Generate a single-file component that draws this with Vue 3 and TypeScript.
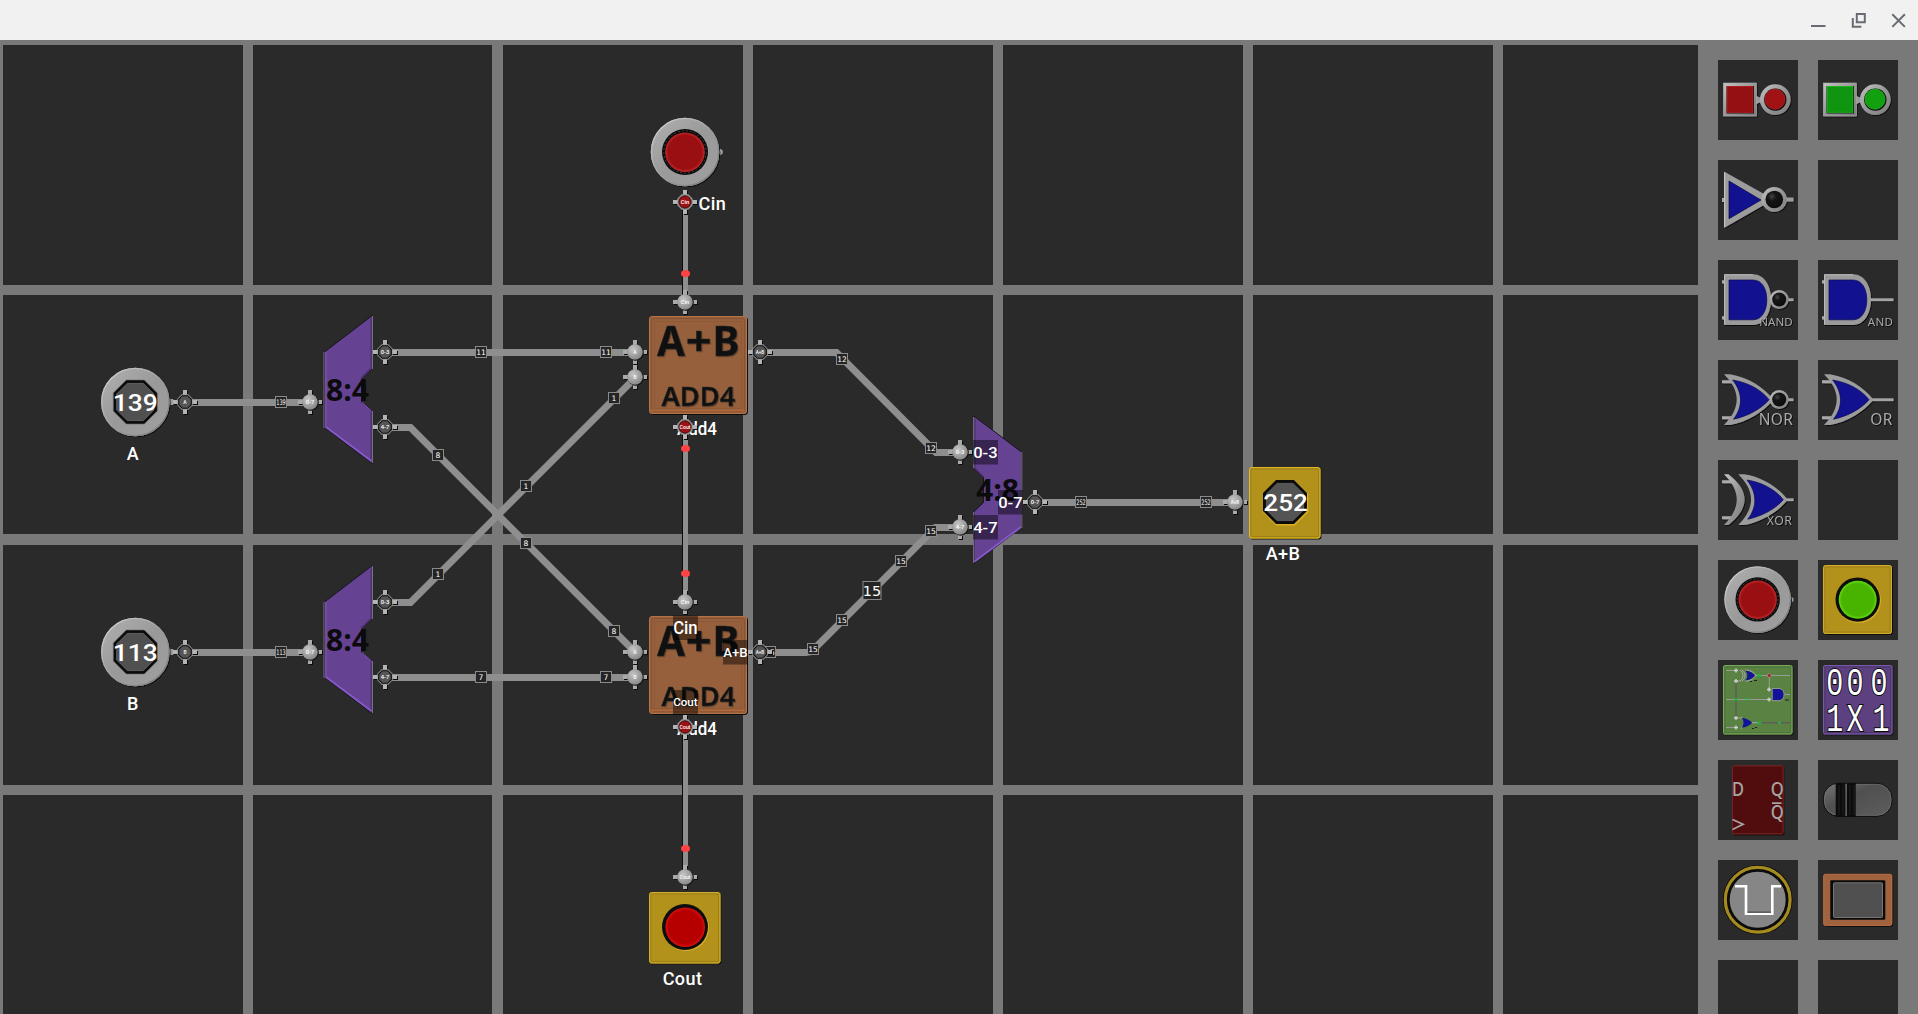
<script setup lang="ts">
type PinKind = 'in' | 'out' | 'on'
interface Pin { x: number; y: number; kind: PinKind; text: string }
interface Tag { x: number; y: number; text: string; size?: number }
interface Hint { x: number; y: number; text: string; size: number; base: number }

const cells = Array.from({ length: 28 }, (_, i) => ({ col: i % 7, row: Math.floor(i / 7) }))

const buses: string[] = [
  'M185 402.5H310',
  'M185 652.5H310',
  'M385 352.5H635',
  'M385 677.5H635',
  'M385 427.5H410.5L635 652',
  'M385 602.5H410.5L635 378',
  'M760 352.5H836.5L936 452.5H960',
  'M810.5 652.5L935.5 527.5H960',
  'M1035 502.5H1235',
]
const wires = [
  { y1: 202, y2: 302 },
  { y1: 427, y2: 602 },
  { y1: 727, y2: 877 },
]
const sparks = [273.5, 448.5, 573.5, 848.5]

const tags: Tag[] = [
  { x: 281, y: 402, text: '139' }, { x: 281, y: 652, text: '113' },
  { x: 481, y: 352, text: '11' }, { x: 606, y: 352, text: '11' },
  { x: 481, y: 677, text: '7' }, { x: 606, y: 677, text: '7' },
  { x: 438, y: 455, text: '8' }, { x: 526, y: 543, text: '8' }, { x: 614, y: 631, text: '8' },
  { x: 438, y: 574, text: '1' }, { x: 526, y: 486, text: '1' }, { x: 614, y: 398, text: '1' },
  { x: 842, y: 359, text: '12' }, { x: 931, y: 448, text: '12' },
  { x: 770, y: 652, text: '15' }, { x: 813, y: 649, text: '15' }, { x: 842, y: 620, text: '15' },
  { x: 872, y: 590.5, text: '15', size: 18 }, { x: 901, y: 561, text: '15' }, { x: 931, y: 531, text: '15' },
  { x: 1081, y: 502, text: '252' }, { x: 1206, y: 502, text: '252' },
]

const pins: Pin[] = [
  { x: 185, y: 402, kind: 'out', text: 'A' },
  { x: 185, y: 652, kind: 'out', text: 'B' },
  { x: 310, y: 402, kind: 'in', text: '0-7' },
  { x: 310, y: 652, kind: 'in', text: '0-7' },
  { x: 385, y: 352, kind: 'out', text: '0-3' },
  { x: 385, y: 427, kind: 'out', text: '4-7' },
  { x: 385, y: 602, kind: 'out', text: '0-3' },
  { x: 385, y: 677, kind: 'out', text: '4-7' },
  { x: 635, y: 352, kind: 'in', text: 'A' },
  { x: 635, y: 377, kind: 'in', text: 'B' },
  { x: 635, y: 652, kind: 'in', text: 'A' },
  { x: 635, y: 677, kind: 'in', text: 'B' },
  { x: 760, y: 352, kind: 'out', text: 'A+B' },
  { x: 760, y: 652, kind: 'out', text: 'A+B' },
  { x: 685, y: 202, kind: 'on', text: 'Cin' },
  { x: 685, y: 302, kind: 'in', text: 'Cin' },
  { x: 685, y: 427, kind: 'on', text: 'Cout' },
  { x: 685, y: 602, kind: 'in', text: 'Cin' },
  { x: 685, y: 727, kind: 'on', text: 'Cout' },
  { x: 685, y: 877, kind: 'in', text: 'Cout' },
  { x: 960, y: 452, kind: 'in', text: '0-3' },
  { x: 960, y: 527, kind: 'in', text: '4-7' },
  { x: 1035, y: 502, kind: 'out', text: '0-7' },
  { x: 1235, y: 502, kind: 'in', text: 'A+B' },
]

const hints: Hint[] = [
  { x: 673, y: 615.5, text: 'Cin', size: 17.5, base: 18 },
  { x: 723, y: 640, text: 'A+B', size: 13.5, base: 17.2 },
  { x: 673, y: 690, text: 'Cout', size: 11, base: 16 },
  { x: 973, y: 440, text: '0-3', size: 15, base: 17.6 },
  { x: 973, y: 515, text: '4-7', size: 15, base: 17.6 },
  { x: 998, y: 490, text: '0-7', size: 15, base: 17.6 },
]

const numberInputs = [
  { x: 135.3, y: 402, value: '139', name: 'A' },
  { x: 135.3, y: 652, value: '113', name: 'B' },
]

const tools = [
  'low', 'high', 'not', '', 'nand', 'and', 'nor', 'or', 'xor', '',
  'input', 'output', 'chip', 'rom', 'dff', 'toggle', 'clock', 'screen', '', '',
]

const OCT = 'M-9 -22H9L22 -9V9L9 22H-9L-22 9V-9Z'
const OCT_IN = 'M-8 -18.6H8L18.6 -8V8L8 18.6H-8L-18.6 8V-8Z'
const PIN_OCT = 'M-3 -7H3L7 -3V3L3 7H-3L-7 3V-3Z'
</script>

<template>
  <div class="window">
    <svg class="defs" width="0" height="0">
      <defs>
        <linearGradient id="metal" x1="0" y1="0" x2="1" y2="1">
          <stop offset="0" stop-color="#c4c4c4" /><stop offset=".5" stop-color="#979797" /><stop offset="1" stop-color="#7d7d7d" />
        </linearGradient>
        <linearGradient id="ring" x1="0" y1="0" x2="1" y2="1">
          <stop offset="0" stop-color="#b2b2b2" /><stop offset=".5" stop-color="#999" /><stop offset="1" stop-color="#a0a0a0" />
        </linearGradient>
        <linearGradient id="rim" x1="0" y1="0" x2="1" y2="1">
          <stop offset="0" stop-color="#d8d8d8" /><stop offset=".5" stop-color="#a0a0a0" /><stop offset="1" stop-color="#6e6e6e" />
        </linearGradient>
        <radialGradient id="redBtn" cx=".5" cy=".5" r=".5">
          <stop offset="0" stop-color="#9a1012" /><stop offset=".85" stop-color="#9a1012" /><stop offset="1" stop-color="#c2282a" />
        </radialGradient>
        <radialGradient id="litRed" cx=".5" cy=".5" r=".5">
          <stop offset="0" stop-color="#b60000" /><stop offset=".84" stop-color="#b60000" /><stop offset="1" stop-color="#da1010" />
        </radialGradient>
        <radialGradient id="greenBtn" cx=".5" cy=".5" r=".5">
          <stop offset="0" stop-color="#48b400" /><stop offset=".84" stop-color="#48b400" /><stop offset="1" stop-color="#62de10" />
        </radialGradient>
        <radialGradient id="knob" cx=".38" cy=".34" r=".7">
          <stop offset="0" stop-color="#c6c6c6" /><stop offset="1" stop-color="#858585" />
        </radialGradient>
        <radialGradient id="bulb" cx=".36" cy=".33" r=".7">
          <stop offset="0" stop-color="#444" /><stop offset=".35" stop-color="#151515" /><stop offset="1" stop-color="#0c0c0c" />
        </radialGradient>
        <linearGradient id="pill" x1="0" y1="0" x2="1" y2="1">
          <stop offset="0" stop-color="#777" /><stop offset=".4" stop-color="#505050" /><stop offset="1" stop-color="#5d5d5d" />
        </linearGradient>
        <filter id="emboss" x="-10%" y="-10%" width="120%" height="120%">
          <feDropShadow dx="1" dy="1" stdDeviation="0.2" flood-color="#090909" />
        </filter>
      </defs>
    </svg>

    <header class="titlebar">
      <svg class="ctl" viewBox="0 0 40 40"><path d="M13 26h14.5" /></svg>
      <svg class="ctl" viewBox="0 0 40 40"><path d="M18.8 14h8v8.2h-8zM14.8 18v8.8h8.6" /></svg>
      <svg class="ctl" viewBox="0 0 40 40"><path d="M14.3 14.3l12.6 12.6M26.9 14.3L14.3 26.9" /></svg>
    </header>

    <main class="body">
      <section class="board">
        <div class="grid">
          <div v-for="(c, i) in cells" :key="i" class="cell" :class="{ narrow: c.col === 1, short: c.row === 1 }"></div>
        </div>

        <svg class="circuit" viewBox="0 40 1698 974" width="1698" height="974">
          <!-- wires -->
          <path v-for="d in buses" :key="d" :d="d" class="bus" />
          <g v-for="w in wires" :key="w.y1">
            <rect x="682" :y="w.y1" width="6" :height="w.y2 - w.y1" fill="#0c0c0c" />
            <rect x="683" :y="w.y1" width="5" :height="w.y2 - w.y1" fill="#8e8e8e" />
          </g>
          <ellipse v-for="y in sparks" :key="y" cx="685.5" :cy="y" rx="4.5" ry="3.5" fill="#ff4242" />
          <g v-for="(t, i) in tags" :key="'t' + i" :transform="`translate(${t.x} ${t.y})`">
            <rect :x="-(t.size ?? 11) / 2" :y="-(t.size ?? 11) / 2" :width="t.size ?? 11" :height="t.size ?? 11" class="tag" />
            <text y="0" :dy="t.size ? 5.2 : 2.7" :font-size="t.size ? 14.5 : 7.6" :textLength="t.text.length > 2 ? 9.5 : undefined" lengthAdjust="spacingAndGlyphs" class="tagtext">{{ t.text }}</text>
          </g>
          <path d="M776 652.5H807.5" class="bus" />
          <path d="M807 652.5L811 655.5H807Z" fill="#8e8e8e" />

          <!-- numeric inputs -->
          <g v-for="n in numberInputs" :key="n.name" :transform="`translate(${n.x} ${n.y})`">
            <path d="M33 -3H38V3H33Z" fill="#9a9a9a" />
            <circle r="34.3" fill="url(#ring)" filter="url(#emboss)" />
            <circle r="33.6" fill="none" stroke="url(#rim)" stroke-width="1.2" />
            <path :d="OCT" fill="#0b0b0b" stroke="#6d6d6d" stroke-width=".6" />
            <path :d="OCT_IN" fill="#505050" stroke="#777" stroke-width=".7" />
            <text x="0" y="9.2" class="value" textLength="45" lengthAdjust="spacingAndGlyphs">{{ n.value }}</text>
            <text x="-2.4" y="57.8" class="label">{{ n.name }}</text>
          </g>

          <!-- splitters -->
          <g v-for="dy in [0, 250]" :key="dy" :transform="`translate(0 ${dy})`">
            <path d="M324.5 352L372.3 315.5V368.5L361.5 379V402L372.3 411.5V463.5L324.5 427.5Z" fill="#654292" stroke="#171320" stroke-width="1" />
            <path d="M326 427L371.5 461" stroke="#8658c6" stroke-width="2" fill="none" />
            <path d="M326 352V427M362 402.5L371.5 411" stroke="#8152bd" stroke-width="1" fill="none" />
            <path d="M371 319V368L361 378M371 412V459" stroke="#53337b" stroke-width="1.6" fill="none" />
            <path d="M324 352V428M372.5 316V369M372.5 411V463" stroke="#77717e" stroke-width="1" fill="none" />
            <text x="347.5" y="401" class="mux" textLength="43" lengthAdjust="spacingAndGlyphs">8:4</text>
          </g>
          <g>
            <path d="M973.8 416L1021.5 452V527.5L973.8 563.5V511.7L983.5 502.5V477.5L973.8 468.5Z" fill="#654292" stroke="#171320" stroke-width="1" />
            <path d="M974.5 561.5L1021 527" stroke="#8658c6" stroke-width="2" fill="none" />
            <path d="M975 419V468L984 477" stroke="#53337b" stroke-width="1.4" fill="none" />
            <path d="M1021.8 452V528M973.6 417V468M973.6 512V563" stroke="#77717e" stroke-width="1" fill="none" />
            <text x="997.5" y="500.5" class="mux" textLength="43" lengthAdjust="spacingAndGlyphs">4:8</text>
          </g>

          <!-- adders -->
          <g v-for="dy in [0, 300]" :key="'add' + dy" :transform="`translate(0 ${dy})`">
            <text x="697" y="434.5" class="label tight" textLength="40" lengthAdjust="spacingAndGlyphs">Add4</text>
            <rect x="649.5" y="316.5" width="97" height="97" rx="2.5" fill="#95603b" stroke="#b47347" stroke-width="1" filter="url(#emboss)" />
            <rect x="651.5" y="318.5" width="93" height="93" rx="3" fill="none" stroke="#885233" stroke-width="1" />
            <rect x="654.5" y="321.5" width="87" height="87" fill="none" stroke="#8e5937" stroke-width="1" />
            <path d="M651 410.5H744" stroke="#b3673b" stroke-width="1.5" />
            <g class="face">
              <text x="671" y="355.5" class="big" textLength="28" lengthAdjust="spacingAndGlyphs">A</text>
              <text x="698.7" y="355.5" class="big" textLength="26" lengthAdjust="spacingAndGlyphs">+</text>
              <text x="726" y="355.5" class="big" textLength="27" lengthAdjust="spacingAndGlyphs">B</text>
              <text x="698.5" y="405.8" class="mid" textLength="74" lengthAdjust="spacingAndGlyphs">ADD4</text>
            </g>
          </g>

          <!-- round input -->
          <g transform="translate(685 152)">
            <path d="M32 -5.5L37.8 -1.5V1.5L32 5.5Z" fill="#9a9a9a" />
            <circle r="34.3" fill="url(#ring)" filter="url(#emboss)" />
            <circle r="33.6" fill="none" stroke="url(#rim)" stroke-width="1.2" />
            <circle r="23" fill="#0a0a0a" />
            <circle r="21.2" fill="none" stroke="#666" stroke-width=".6" stroke-dasharray="2 2" />
            <circle cy=".2" r="19.8" fill="url(#redBtn)" />
          </g>
          <text x="712.3" y="210" class="label">Cin</text>

          <!-- lamps -->
          <g transform="translate(649 892)">
            <rect x=".5" y=".5" width="70.5" height="70.5" rx="2" fill="#b3921b" stroke="#d0ad2a" filter="url(#emboss)" />
            <rect x="2" y="2" width="67.5" height="67.5" rx="1.5" fill="none" stroke="#9d8018" />
            <circle cx="37" cy="36" r="23" fill="#d5b02a" />
            <circle cx="36" cy="35" r="23" fill="#0d0d0d" />
            <circle cx="36.2" cy="35.2" r="19.8" fill="url(#litRed)" />
            <text x="33.5" y="92.5" class="label">Cout</text>
          </g>
          <g transform="translate(1249 467)">
            <rect x=".5" y=".5" width="70.5" height="70.5" rx="2" fill="#b3921b" stroke="#dfb820" filter="url(#emboss)" />
            <rect x="2" y="2" width="67.5" height="67.5" rx="1.5" fill="none" stroke="#9d8018" />
            <path :d="OCT" transform="translate(36.6 35.8) scale(1.03)" fill="#d8b020" />
            <path :d="OCT" transform="translate(36 35)" fill="#0b0b0b" />
            <path :d="OCT_IN" transform="translate(36 35)" fill="#545454" stroke="#707070" stroke-width=".7" />
            <text x="36.6" y="44.3" class="value" textLength="44.5" lengthAdjust="spacingAndGlyphs">252</text>
            <text x="34" y="92.8" class="label">A+B</text>
          </g>

          <!-- pins -->
          <g v-for="(p, i) in pins" :key="'p' + i" :transform="`translate(${p.x} ${p.y})`">
            <template v-if="p.kind === 'in'">
              <path d="M-11 -1H-6V3H-11ZM9 -1H13V3H9ZM-1 -11H3V-7H-1ZM-1 9H3V13H-1Z" fill="#0b0b0b" />
              <path d="M-12 -2H-7V2H-12ZM8.3 -2H12V2H8.3ZM-2 -12H2V-7H-2ZM-2 8.3H2V12H-2Z" fill="#aaa" />
              <circle cx=".7" cy=".7" r="8" fill="#0e0e0e" />
              <circle r="7.8" fill="url(#knob)" />
            </template>
            <template v-else>
              <path d="M-11 -1H13V3H-11ZM-1 -11H3V13H-1Z" fill="#0b0b0b" />
              <path d="M-12 -2H12V2H-12ZM-2 -12H2V12H-2Z" fill="#b4b4b4" />
              <path :d="PIN_OCT" fill="#adadad" stroke="#989898" stroke-width="1.4" />
              <path v-if="p.kind === 'out'" :d="PIN_OCT" transform="scale(.9)" fill="#555" stroke="#0b0b0b" stroke-width="1.2" />
              <circle v-else r="6.2" fill="#9c1114" stroke="#26090a" stroke-width=".9" />
            </template>
            <text y="1.7" class="pintext" :textLength="p.text.length > 1 ? (p.text.length > 3 ? 11 : 8.5) : undefined" lengthAdjust="spacingAndGlyphs">{{ p.text }}</text>
          </g>

          <!-- hover hints -->
          <g v-for="h in hints" :key="h.text + h.y" :transform="`translate(${h.x} ${h.y})`">
            <rect width="25" height="24.5" fill="#000" fill-opacity=".45" />
            <text x="12.4" :y="h.base" :font-size="h.size" textLength="24.5" lengthAdjust="spacingAndGlyphs" class="hint">{{ h.text }}</text>
          </g>
        </svg>
      </section>

      <aside class="palette">
        <div v-for="(t, i) in tools" :key="i" class="slot">
          <svg v-if="t" viewBox="0 0 80 80" width="80" height="80">
            <g v-if="t === 'low' || t === 'high'">
              <g filter="url(#emboss)">
                <path d="M37 35.5L42 37.5H46V42.5H42L37 44.5Z" fill="#9a9a9a" />
                <rect x="5.3" y="23" width="33" height="33" fill="url(#metal)" stroke="#aaa" stroke-width=".6" />
                <circle cx="57.3" cy="39.6" r="15.3" fill="url(#metal)" />
              </g>
              <rect x="8.5" y="26" width="27.5" height="27.5" fill="#101010" />
              <rect x="9.3" y="26.5" width="25.5" height="25.8" :fill="t === 'low' ? '#951012' : '#109510'" :stroke="t === 'low' ? '#b51a1c' : '#1cb41c'" stroke-width="1" />
              <circle cx="57.3" cy="39.6" r="11.2" fill="#0e0e0e" />
              <circle cx="57" cy="39.2" r="10" :fill="t === 'low' ? '#a01214' : '#10a010'" :stroke="t === 'low' ? '#bb2224' : '#22bb22'" stroke-width=".8" />
            </g>

            <g v-else-if="t === 'not'">
              <g filter="url(#emboss)">
                <rect x="4" y="38" width="3" height="4" fill="#aaa" />
                <path d="M6 11.5L46 34V45L6 68Z" fill="#9c9c9c" />
                <rect x="68" y="37.5" width="7.5" height="4" fill="#999" />
                <circle cx="56.3" cy="39.5" r="12.5" fill="url(#metal)" />
              </g>
              <path d="M6.6 12.5V67" stroke="#c2c2c2" stroke-width="1.2" />
              <path d="M11 21L43 40L11 58.7Z" fill="#121290" stroke="#080840" stroke-width=".7" />
              <circle cx="56.3" cy="39.5" r="8.8" fill="url(#bulb)" />
            </g>

            <g v-else-if="t === 'nand' || t === 'and'">
              <g filter="url(#emboss)">
                <path d="M4 20.3H8V23.5H4ZM4 56.3H8V59.5H4Z" fill="#aaa" />
                <rect x="50" y="38.3" width="25.5" height="2.8" fill="#a3a3a3" />
                <path d="M6 14.3H35C47 14.3 53 27 53 39.6S47 65 35 65H6Z" fill="#9a9a9a" />
                <circle v-if="t === 'nand'" cx="61.2" cy="39.5" r="9.5" fill="url(#metal)" />
              </g>
              <path d="M6.6 64V14.8H35" fill="none" stroke="#bcbcbc" stroke-width="1" />
              <path d="M11 20H35C44 20 48.8 29 48.8 39.8S44 59.8 35 59.8H11Z" fill="#121290" stroke="#0a0a50" stroke-width=".7" />
              <circle v-if="t === 'nand'" cx="61.2" cy="39.5" r="7" fill="url(#bulb)" />
              <text :x="t === 'nand' ? 58 : 62.3" y="65.5" font-size="11.5" class="gate" :textLength="t === 'nand' ? 33.5 : 25">{{ t.toUpperCase() }}</text>
            </g>

            <g v-else-if="t === 'nor' || t === 'or' || t === 'xor'">
              <g filter="url(#emboss)">
                <path d="M4 20.3H16V23.3H4ZM4 56.3H16V59.3H4Z" fill="#aaa" />
                <path v-if="t === 'xor'" d="M6 14.3H10.5C32 31 32 48 10.5 65H6C23 48 23 31 6 14.3Z" fill="url(#metal)" />
                <g :transform="t === 'xor' ? 'translate(14.3 0)' : undefined">
                  <rect x="50" y="38.3" :width="t === 'xor' ? 11.3 : 25.5" height="2.8" fill="#a3a3a3" />
                  <path d="M6 14.3H12C30 17 46 28 54 38V41.5C46 51 30 62 12 65H6C23 48 23 31 6 14.3Z" fill="#9c9c9c" />
                </g>
                <circle v-if="t === 'nor'" cx="61.2" cy="39.5" r="9.5" fill="url(#metal)" />
              </g>
              <path :transform="t === 'xor' ? 'translate(14.3 0)' : undefined" d="M14.7 20C30 22.5 43 29.5 51 39.7C43 49 30 56 15.5 59.2C25 47 25 33 14.7 20Z" fill="#121290" stroke="#0a0a50" stroke-width=".7" />
              <circle v-if="t === 'nor'" cx="61.2" cy="39.5" r="7" fill="url(#bulb)" />
              <text v-if="t === 'nor'" x="57.8" y="65.3" font-size="15.5" class="gate" textLength="34">NOR</text>
              <text v-else-if="t === 'or'" x="63.3" y="65.3" font-size="15.5" class="gate" textLength="22">OR</text>
              <text v-else x="61.3" y="65.3" font-size="12.3" class="gate" textLength="25">XOR</text>
            </g>

            <g v-else-if="t === 'input'">
              <path d="M71 35L75.5 38.3V41L71 44.5Z" fill="#9a9a9a" />
              <circle cx="39.6" cy="39.6" r="33.3" fill="url(#ring)" filter="url(#emboss)" />
              <circle cx="39.6" cy="39.6" r="32.6" fill="none" stroke="url(#rim)" stroke-width="1.2" />
              <circle cx="39.7" cy="39.4" r="22.2" fill="#0a0a0a" />
              <circle cx="39.7" cy="39.4" r="20.6" fill="none" stroke="#666" stroke-width=".6" stroke-dasharray="2 2" />
              <circle cx="39.7" cy="39.7" r="19.2" fill="url(#redBtn)" />
            </g>

            <g v-else-if="t === 'output'">
              <rect x="5.5" y="5.5" width="68" height="68" rx="2" fill="#b3921b" stroke="#d0ad2a" filter="url(#emboss)" />
              <rect x="7" y="7" width="65" height="65" rx="1.5" fill="none" stroke="#9d8018" />
              <circle cx="40.5" cy="40.5" r="22.5" fill="#d5b02a" />
              <circle cx="39.7" cy="39.6" r="22.2" fill="#0d0d0d" />
              <circle cx="39.7" cy="39.7" r="19" fill="url(#greenBtn)" />
            </g>

            <g v-else-if="t === 'chip'">
              <rect x="5.5" y="5.5" width="68.5" height="68.5" rx="1.5" fill="#5a8243" stroke="#78a85c" filter="url(#emboss)" />
              <rect x="7" y="7" width="65.5" height="65.5" fill="none" stroke="#4f753a" />
              <path d="M8 10.5H20M36 15.5H72M8 39.5H52M8 67.5H20M51.3 15.5V30M18 21H23M18 58H23M67 34.5H72" stroke="#9a9a9a" stroke-width="1" fill="none" />
              <path d="M18 22V60M40 62.8H72" stroke="#5e5e5e" stroke-width="1.5" fill="none" />
              <path d="M24 10C28 13 28 18 24 21M22 10C26 13 26 18 22 21M27 10C34 10 36 13 38 15.5C36 18 34 21 27 21M23 57C28 60 28 66 23 68.5M34 62.7H41" stroke="#aaa" stroke-width="1" fill="none" />
              <path d="M27.5 10.5C32 11 35 13 37 15.5C35 18 32 20 27.5 20.5C30 17 30 14 27.5 10.5ZM24 57.8C29 58.5 32 60.5 34 62.7C32 65 29 67 24 67.8C26 64 26 61 24 57.8ZM54.5 29H62C67 30 67 39 62 40H54.5Z" fill="#12129a" />
              <path d="M54.2 28.5H62C67.5 29.5 67.5 39.5 62 40.8H54.2Z" fill="none" stroke="#999" stroke-width=".8" />
              <path d="M18 8.5V12.5M16 10.5H20M18 19V23M16 21H20M51 27.5V31.5M49 29.5H53M51 37.5V41.5M49 39.5H53M18 56V60M16 58H20M18 65.5V69.5M16 67.5H20" stroke="#cfcfcf" stroke-width="1.4" />
              <path d="M32 21.5h2m2-1h3M34 68.5h2m1-1h2M67 40h4" stroke="#202020" stroke-width="1" />
              <circle cx="51.3" cy="15.5" r="1.9" fill="#9b2020" stroke="#bbb" stroke-width=".5" />
              <circle cx="41.5" cy="15.5" r="1.8" fill="#20b23c" /><circle cx="41.5" cy="62.8" r="1.8" fill="#20b23c" />
              <circle cx="18" cy="39.5" r="1.6" fill="#20b23c" /><circle cx="29" cy="39.3" r="1.2" fill="#20c23c" /><circle cx="61.5" cy="62.8" r="1.2" fill="#20c23c" />
            </g>

            <g v-else-if="t === 'rom'">
              <rect x="5.5" y="5.5" width="68.5" height="68.5" rx="1.5" fill="#5b417f" stroke="#775aa6" filter="url(#emboss)" />
              <rect x="7" y="7" width="65.5" height="65.5" fill="none" stroke="#4c366c" />
              <text v-for="(g, k) in ['0', '0', '0', '1', 'X', '1']" :key="k" :x="[16.7, 37, 61][k % 3] + (k === 5 ? 2 : 0)" :y="k < 3 ? 34.6 : 71.3" textLength="17" lengthAdjust="spacingAndGlyphs" class="rom">{{ g }}</text>
            </g>

            <g v-else-if="t === 'dff'">
              <rect x="14.5" y="5.8" width="50.5" height="68" rx="1" fill="#510f11" stroke="#7b2426" filter="url(#emboss)" />
              <text x="20" y="36" class="ff" textLength="12" lengthAdjust="spacingAndGlyphs">D</text>
              <text x="59.3" y="36" class="ff" textLength="13" lengthAdjust="spacingAndGlyphs">Q</text>
              <text x="59.3" y="58.6" class="ff" textLength="13" lengthAdjust="spacingAndGlyphs">Q</text>
              <path d="M54 43.2H63.5M14.5 59.5L25 64.3L14.5 69.5" fill="none" stroke="#a5a5a5" stroke-width="1.8" />
            </g>

            <g v-else-if="t === 'toggle'">
              <rect x="5.3" y="23.3" width="68.7" height="33" rx="15" fill="url(#pill)" stroke="#0b0b0b" stroke-width="1" />
              <rect x="6.5" y="24.3" width="66.5" height="31" rx="14" fill="none" stroke="#777" stroke-width=".8" opacity=".7" />
              <path d="M17.7 23H27.3V57H17.7ZM29 23H37.7V57H29Z" fill="#0c0c0c" />
              <path d="M28.2 24V56" stroke="#5a5a5a" stroke-width="1" />
              <path d="M21 25V55M25 25V55M32 25V55M36 25V55" stroke="#262626" stroke-width=".8" />
            </g>

            <g v-else-if="t === 'clock'">
              <circle cx="39.7" cy="39.7" r="34.8" fill="#0a0a0a" />
              <circle cx="39.7" cy="39.7" r="32.4" fill="none" stroke="#a48b20" stroke-width="3.2" />
              <circle cx="39.7" cy="39.7" r="29" fill="#868686" stroke="#0c0c0c" stroke-width="2" />
              <path d="M17 26.3H28V53.8H54.3V26.3H63" fill="none" stroke="#fff" stroke-width="2.6" />
              <path d="M29.5 52.2H53" stroke="#333" stroke-width="1" />
            </g>

            <g v-else-if="t === 'screen'">
              <rect x="5.7" y="14.3" width="68" height="51" rx="1.5" fill="#a06440" stroke="#bd6d40" filter="url(#emboss)" />
              <rect x="12.3" y="20.3" width="55" height="39.5" rx="1" fill="#0a0a0a" />
              <rect x="15.5" y="22.8" width="49" height="34.7" rx="1" fill="#505050" stroke="#747474" />
            </g>
          </svg>
        </div>
      </aside>
    </main>
  </div>
</template>

<style>
body { margin: 0; overflow: hidden; }
</style>

<style scoped>
.window { width: 1918px; height: 1014px; display: flex; flex-direction: column; overflow: hidden; background: #797979; font-family: Roboto, "Liberation Sans", sans-serif; }
.defs { position: absolute; }
.titlebar { flex: 0 0 40px; display: flex; justify-content: flex-end; background: #f1f1f1; }
.ctl { width: 40px; height: 40px; fill: none; stroke: #686c71; stroke-width: 2; }
.body { flex: 1; display: flex; min-height: 0; }
.board { position: relative; width: 1698px; flex: none; overflow: hidden; }
.grid { display: grid; grid-template-columns: repeat(6, 240px) 195px; grid-template-rows: repeat(4, 240px); gap: 10px; padding: 5px 0 0 3px; }
.cell { background: #2a2a2a; }
.cell.narrow { margin-right: 1px; }
.cell.short { margin-bottom: 1px; }
.circuit { position: absolute; left: 0; top: 0; }
.circuit text, .slot text { text-anchor: middle; }
.bus { fill: none; stroke: #8e8e8e; stroke-width: 7; }
.tag { fill: #242424; stroke: #8a8a8a; stroke-width: 1; }
.tagtext { fill: #fff; font-family: "DejaVu Sans", sans-serif; }
.label { fill: #fff; font-size: 18px; font-weight: 500; letter-spacing: .4px; }
.label.tight { letter-spacing: 0; }
.value { fill: #fff; font-size: 24.5px; font-weight: 500; }
.mux { fill: #0b0b0c; font-family: "Open Sans", "Noto Sans", sans-serif; font-size: 30px; font-weight: 700; }
.face { filter: drop-shadow(1px 1px 0 #70482c); }
.big { fill: #101010; stroke: #2b2b2b; stroke-width: .5; font-family: "Noto Sans", sans-serif; font-size: 41px; font-weight: 700; }
.mid { fill: #101010; stroke: #2b2b2b; stroke-width: .5; font-family: "Noto Sans", sans-serif; font-size: 27px; font-weight: 600; }
.pintext { fill: #fff; font-size: 5px; font-weight: 500; }
.hint { fill: #fff; font-weight: 500; }
.palette { flex: none; display: grid; grid-template-columns: 80px 80px; grid-auto-rows: 80px; gap: 20px; padding: 20px; align-content: start; overflow: hidden; }
.slot { background: #2a2a2a; }
.slot svg { display: block; }
.gate { fill: #aaa; font-family: "Noto Sans", sans-serif; filter: drop-shadow(1px 1px 0 #0c0c0c); }
.rom { fill: #fff; stroke: #080808; stroke-width: 2px; paint-order: stroke; font-family: "Liberation Mono", monospace; font-size: 38px; font-weight: 400; }
.ff { fill: #a5a5a5; font-family: "Noto Sans", sans-serif; font-size: 19px; font-weight: 500; }
</style>
